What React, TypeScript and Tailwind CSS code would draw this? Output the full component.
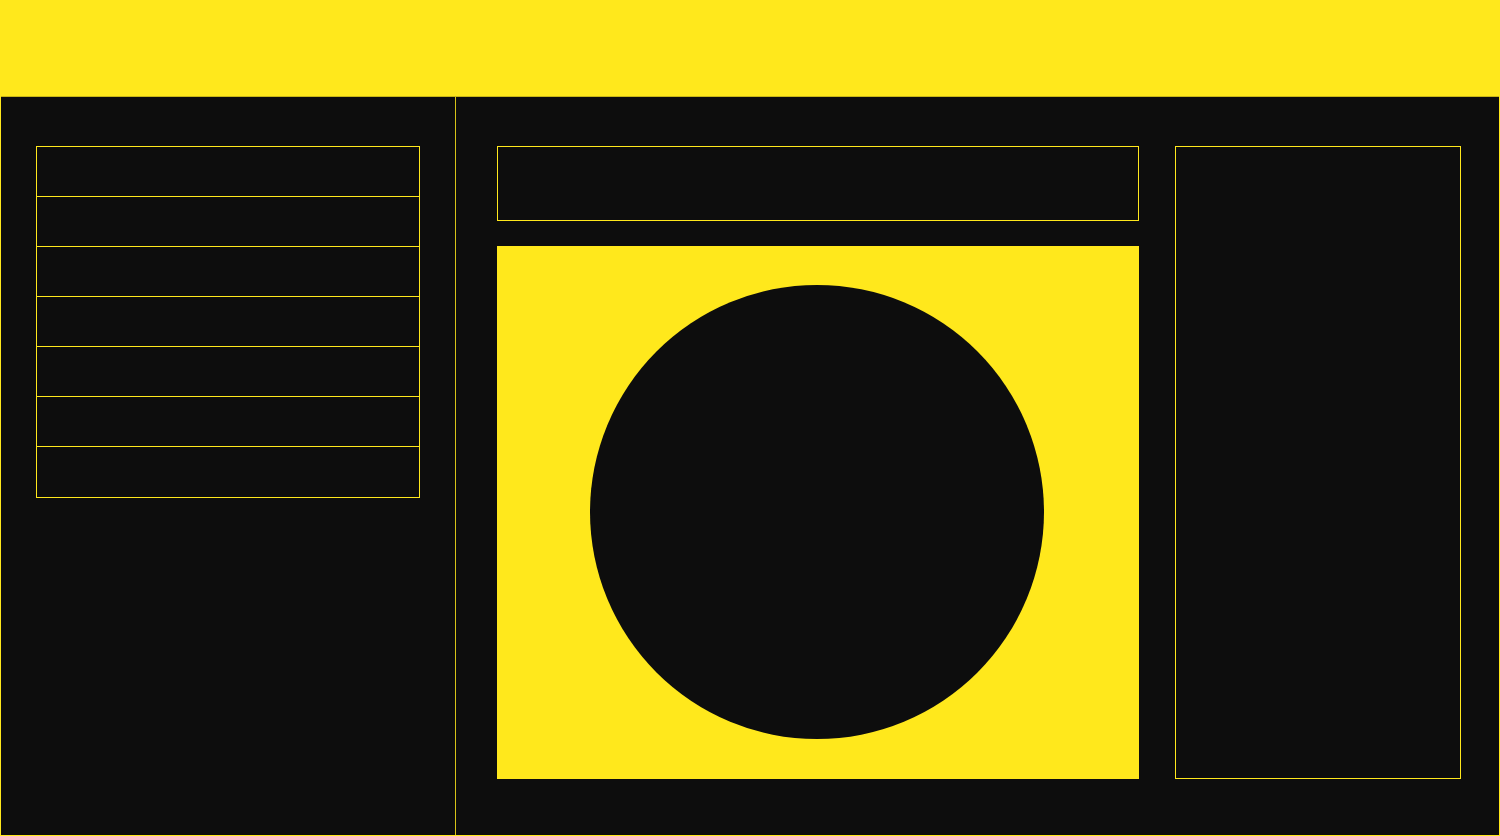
import React from 'react';

const rows = [0, 1, 2, 3, 4, 5, 6];

const App: React.FC = (): React.ReactElement => {
    return (
        <div className="w-[1500px] h-[836px] border border-[#ffe81c] bg-[#0d0d0d] flex flex-col">
            <div className="h-[96px] bg-[#ffe81c] border-b border-[#c9b716]" />
            <div className="flex flex-1">
                {/* sidebar */}
                <div className="w-[455px] border-r border-[#d6c218] pl-[35px] pt-[49px]">
                    <div className="w-[384px] border border-[#ffe81c]">
                        {rows.map((r) => (
                            <div
                                key={r}
                                className={r < rows.length - 1 ? 'h-[50px] border-b border-[#ffe81c]' : 'h-[50px]'}
                            />
                        ))}
                    </div>
                </div>

                {/* main */}
                <div className="flex flex-1 pl-[41px] pt-[49px] pr-[38px] pb-[56px]">
                    <div className="flex flex-col w-[642px] gap-[25px]">
                        <div className="h-[75px] border border-[#ffe81c]" />
                        <div className="flex-1 bg-[#ffe81c] pl-[93px] pt-[39px]">
                            <div className="w-[454px] h-[454px] rounded-full bg-[#0d0d0d]" />
                        </div>
                    </div>
                    <div className="ml-[36px] w-[286px] border border-[#ffe81c]" />
                </div>
            </div>
        </div>
    );
};

export default App;
